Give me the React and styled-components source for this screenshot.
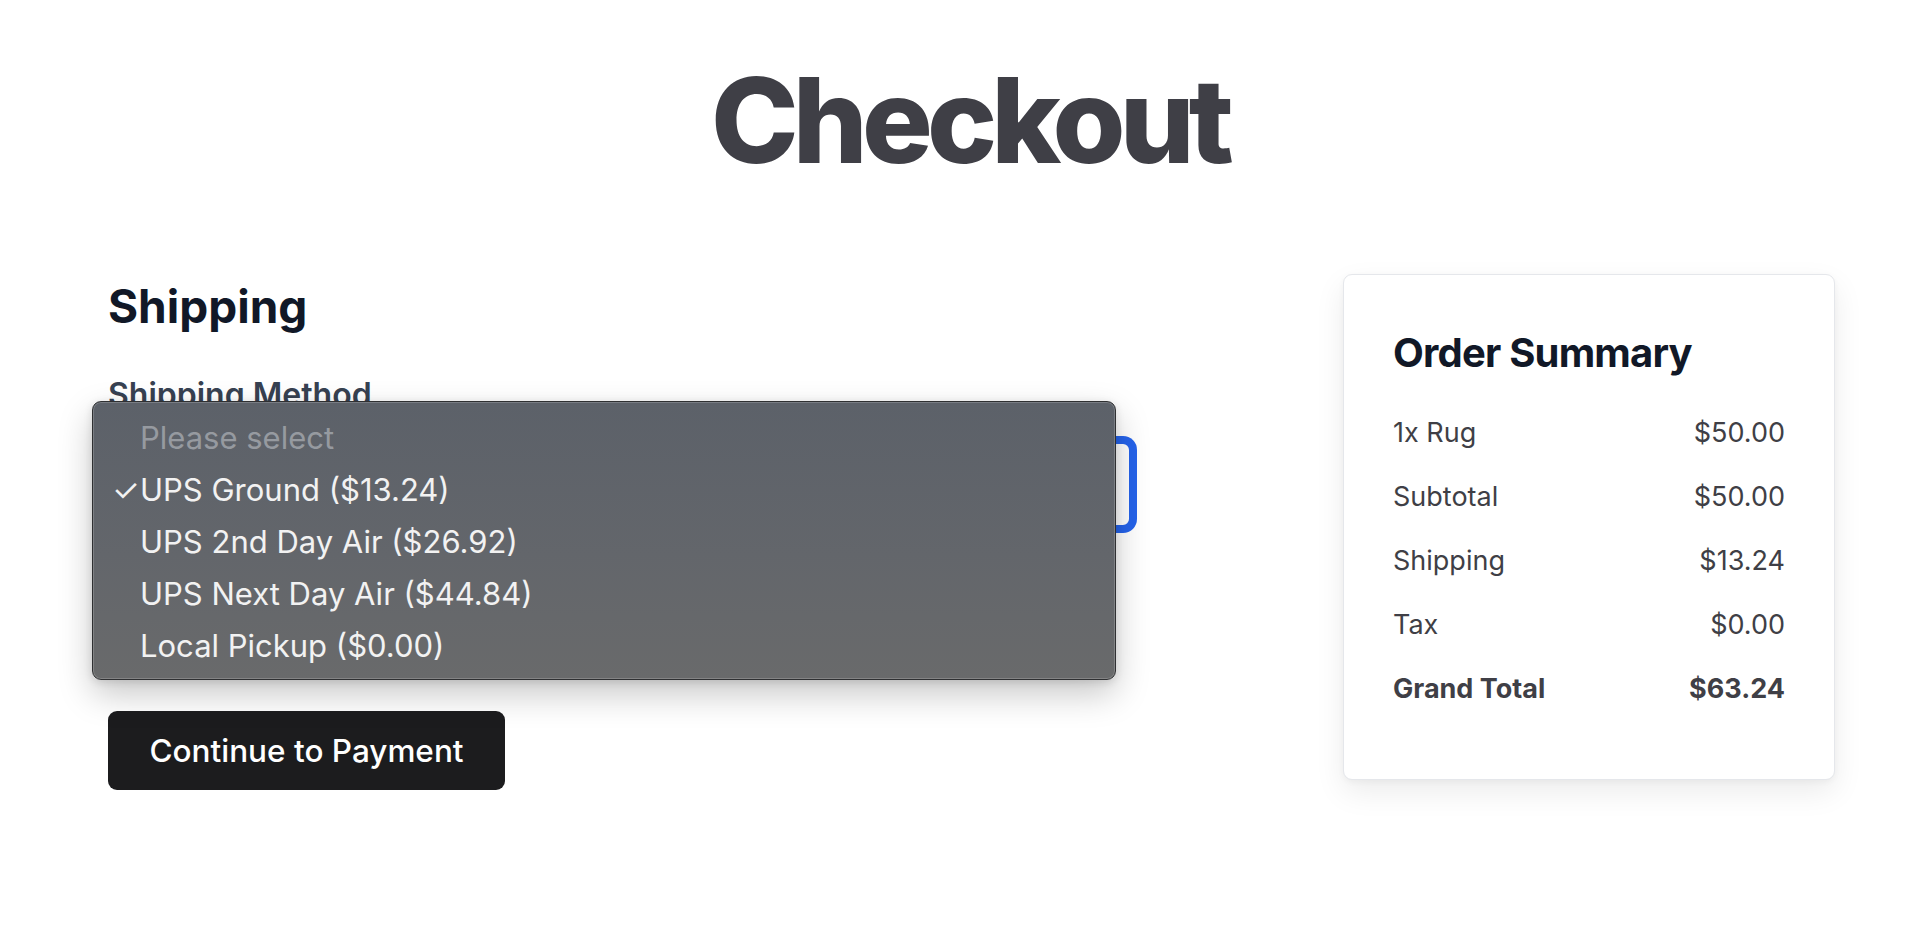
import React from 'react';
import styled, { createGlobalStyle } from 'styled-components';

const GlobalStyle = createGlobalStyle`
  html, body {
    margin: 0;
    padding: 0;
    background: #ffffff;
  }
  body {
    font-family: Inter, "Noto Sans", "Liberation Sans", sans-serif;
    color: #3f3f46;
  }
`;

const Page = styled.div`
  width: 100%;
  min-height: 938px;
  box-sizing: border-box;
  padding: 61px 95px 0 108px;
`;

const Title = styled.h1`
  margin: 0;
  text-align: center;
  font-size: 118px;
  line-height: 1;
  font-weight: 800;
  letter-spacing: -0.05em;
  color: #3f3f46;
  padding-right: 4px;
`;

const Columns = styled.div`
  display: grid;
  grid-template-columns: 1025px 492px;
  justify-content: space-between;
  align-items: start;
  margin-top: 95px;
`;

const ShippingForm = styled.section`
  padding-top: 5px;
`;

const Heading = styled.h2`
  margin: 0;
  font-size: 46px;
  line-height: 1.2;
  font-weight: 700;
  color: #111827;
`;

const Label = styled.label`
  display: block;
  margin-top: 42px;
  font-size: 32px;
  line-height: 1.2;
  font-weight: 600;
  color: #374151;
`;

const SelectWrap = styled.div`
  position: relative;
  margin-top: 25px;
`;

const SelectBox = styled.div`
  height: 89px;
  box-sizing: border-box;
  border: 4px solid #2563eb;
  border-radius: 10px;
  box-shadow: 0 0 0 4px #2563eb;
  background: #ffffff;
`;

const Popup = styled.ul`
  position: absolute;
  left: -16px;
  top: -39px;
  width: 1024px;
  height: 279px;
  box-sizing: border-box;
  margin: 0;
  padding: 10px 0;
  list-style: none;
  border-radius: 9px;
  border: 1px solid #2f3032;
  background: linear-gradient(180deg, #5c6169 0%, #63666b 55%, #696a6b 100%);
  box-shadow: inset 0 0 0 1px rgba(255, 255, 255, 0.18), 0 14px 34px rgba(0, 0, 0, 0.22), 0 2px 8px rgba(0, 0, 0, 0.12);
  z-index: 10;
`;

const Option = styled.li`
  position: relative;
  height: 52px;
  display: flex;
  align-items: center;
  padding-left: 47px;
  font-size: 31px;
  color: ${p => (p.$muted ? '#969aa0' : '#f2f2f2')};
`;

const Check = styled.span`
  position: absolute;
  left: 19px;
  font-size: 31px;
  font-weight: 400;
  color: #f2f2f2;
`;

const Button = styled.button`
  margin-top: 182px;
  width: 397px;
  height: 79px;
  border: none;
  border-radius: 9px;
  background: #1c1c1e;
  color: #ffffff;
  font-family: inherit;
  font-size: 31.5px;
  font-weight: 500;
  cursor: pointer;
`;

const Card = styled.aside`
  box-sizing: border-box;
  height: 506px;
  padding: 54px 49px 0 49px;
  border: 1px solid #e5e7eb;
  border-radius: 9px;
  background: #ffffff;
  box-shadow: 0 12px 30px rgba(0, 0, 0, 0.08), 0 2px 6px rgba(0, 0, 0, 0.04);
`;

const CardTitle = styled.h3`
  margin: 0 0 36px;
  font-size: 40px;
  line-height: 1.2;
  font-weight: 700;
  letter-spacing: -0.02em;
  color: #111827;
`;

const Rows = styled.div`
  display: flex;
  flex-direction: column;
  gap: 25px;
`;

const Row = styled.div`
  display: flex;
  justify-content: space-between;
  font-size: 27px;
  line-height: 39px;
  font-weight: ${p => (p.$strong ? 700 : 400)};
  color: #3f3f46;
`;

const options = [
  { label: 'UPS Ground ($13.24)', checked: true },
  { label: 'UPS 2nd Day Air ($26.92)' },
  { label: 'UPS Next Day Air ($44.84)' },
  { label: 'Local Pickup ($0.00)' },
];

const summary = [
  ['1x Rug', '$50.00'],
  ['Subtotal', '$50.00'],
  ['Shipping', '$13.24'],
  ['Tax', '$0.00'],
];

export default function App() {
  return (
    <>
      <GlobalStyle />
      <Page>
        <Title>Checkout</Title>
        <Columns>
          <ShippingForm>
            <Heading>Shipping</Heading>
            <Label>Shipping Method</Label>
            <SelectWrap>
              <SelectBox />
              <Popup>
                <Option $muted>Please select</Option>
                {options.map(o => (
                  <Option key={o.label}>
                    {o.checked && <Check>✓</Check>}
                    {o.label}
                  </Option>
                ))}
              </Popup>
            </SelectWrap>
            <Button>Continue to Payment</Button>
          </ShippingForm>
          <Card>
            <CardTitle>Order Summary</CardTitle>
            <Rows>
              {summary.map(([k, v]) => (
                <Row key={k}>
                  <span>{k}</span>
                  <span>{v}</span>
                </Row>
              ))}
              <Row $strong>
                <span>Grand Total</span>
                <span>$63.24</span>
              </Row>
            </Rows>
          </Card>
        </Columns>
      </Page>
    </>
  );
}
